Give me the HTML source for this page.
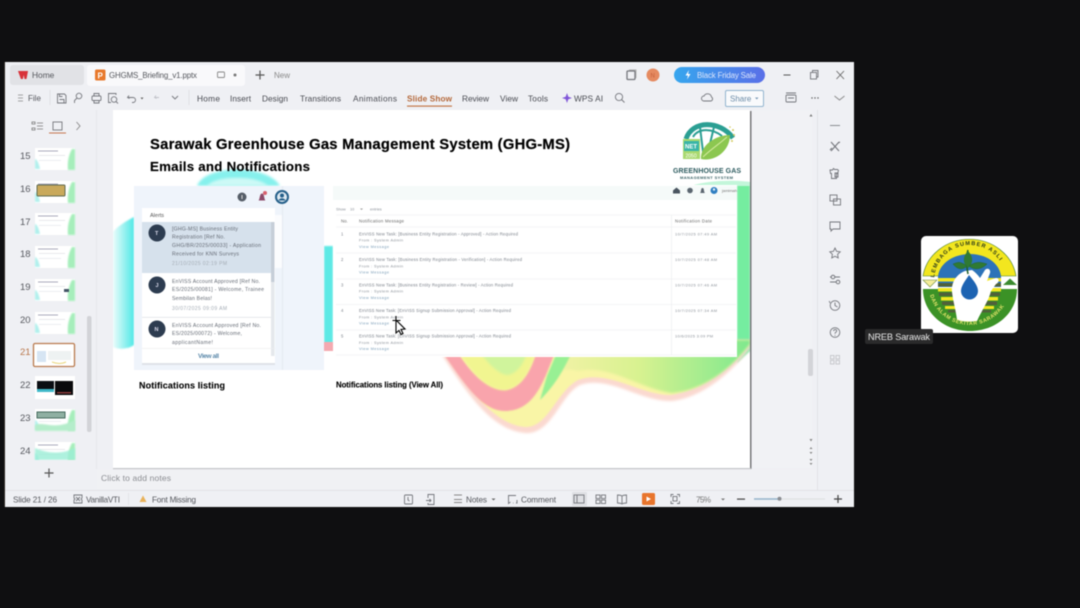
<!DOCTYPE html>
<html><head><meta charset="utf-8"><style>
html,body{margin:0;padding:0;background:#0f0f11;width:1080px;height:608px;overflow:hidden}
svg{display:block;filter:blur(.45px)}
text{font-family:"Liberation Sans",sans-serif;fill:#55575d;font-size:8.2px}
.m{font-size:8.3px;fill:#484a51}
.s{font-size:4.2px;fill:#7b818a}
.a{font-size:5.2px;fill:#666c76}
.l{font-size:3.9px;fill:#8a9098}
.v{font-size:3.9px;fill:#7fa0ba}
.b{font-weight:bold;fill:#000}
.i{fill:none;stroke:#74767c;stroke-width:.9}
</style></head><body>
<svg width="1080" height="608" viewBox="0 0 1080 608" xmlns="http://www.w3.org/2000/svg">
<defs>
<linearGradient id="btn" x1="0" x2="1"><stop offset="0" stop-color="#36a6ee"/><stop offset="1" stop-color="#5a6fe8"/></linearGradient>
<linearGradient id="rs" x1="0" x2="1"><stop offset="0" stop-color="#f4f2a8"/><stop offset=".45" stop-color="#d8f290"/><stop offset="1" stop-color="#7ee88e"/></linearGradient>
<linearGradient id="cy" x1="0" x2="1"><stop offset="0" stop-color="#eafcfb"/><stop offset="1" stop-color="#4fe8e6"/></linearGradient>
<filter id="bl"><feGaussianBlur stdDeviation="1.2"/></filter>
<filter id="bs"><feGaussianBlur stdDeviation=".8"/></filter>
<g id="th"><rect width="40" height="22" fill="#fff"/><rect x="3" y="2.500" width="20" height="1" fill="#aab"/><rect x="4" y="7" width="26" height=".8" fill="#e2e4e8"/><rect x="4" y="12" width="22" height=".8" fill="#e8eaee"/><path d="M33 22C32 14 34 6 37 1L40 1V22Z" fill="#a6eebb" filter="url(#bs)"/><path d="M0 21V11C2 11 4 16 5 21Z" fill="#b0f0ec" filter="url(#bs)"/></g>
<clipPath id="sc"><rect x="113" y="110" width="637" height="358"/></clipPath>
<clipPath id="tl"><rect x="921" y="236" width="97" height="97" rx="5"/></clipPath>
<clipPath id="thc"><rect x="30" y="112" width="50" height="348"/></clipPath>
<path id="topa" d="M934 281A36 36 0 0 1 1006 281"/>
<path id="bota" d="M929.500 293A41 41 0 0 0 1009.500 293"/>
</defs>

<!-- window -->
<rect x="5" y="62" width="849" height="445" fill="#eff0f4"/>
<rect x="4" y="62" width="1" height="445" fill="#2b2622"/>
<rect x="10" y="65" width="74" height="20" rx="3" fill="#e1e2e6"/>
<rect x="87" y="65" width="158" height="21" rx="3" fill="#f9f9fb"/>
<path d="M18 71h10l-1.500 8h-2l-.8-4-.8 4h-2z" fill="#d8323a"/>
<text x="32" y="78" style="font-size:8.400px">Home</text>
<rect x="95" y="69.500" width="10.500" height="11" rx="1.500" fill="#e8792c"/>
<text x="97.500" y="78.500" style="font-size:8px;fill:#fff;font-weight:bold">P</text>
<text x="109" y="78" textLength="88" style="font-size:7.900px">GHGMS_Briefing_v1.pptx</text>
<rect x="217.500" y="72" width="7" height="5.500" rx="1" class="i" style="stroke:#888"/>
<circle cx="235" cy="75" r="1.500" fill="#777"/>
<path d="M260 70.500v9M255.500 75h9" stroke="#555" stroke-width="1.200"/>
<text x="274" y="78" style="font-size:8px;fill:#888">New</text>

<rect x="627" y="71" width="8" height="8.500" rx="1" class="i" style="stroke-width:1.300"/><path d="M629 70h7v8" class="i" style="stroke:#aaa"/>
<circle cx="653" cy="75" r="6.500" fill="#e58a60"/><text x="650.500" y="77.500" style="font-size:6px;fill:#c5603c">N</text>
<rect x="674" y="67" width="91" height="16" rx="8" fill="url(#btn)"/>
<path d="M689 70l-3.500 5.500h2.500l-1 4 3.500-5.500h-2.500z" fill="#fff"/>
<text x="697" y="78" textLength="59" style="font-size:7.900px;fill:#dbe5fb">Black Friday Sale</text>
<path d="M783.500 75h7" stroke="#555" stroke-width="1"/>
<rect x="810.500" y="72.500" width="6" height="6.500" class="i"/><path d="M812.500 72.500v-2h5.500v6.500h-1.500" class="i"/>
<path d="M836.500 71l7.500 8M844 71l-7.500 8" class="i" style="stroke:#666"/>

<path d="M18 95h5M18 98h5M18 101h5" stroke="#888" stroke-width=".8"/>
<text x="28" y="101" style="font-size:8px">File</text>
<path d="M50 90v15M189 90v15" stroke="#dfe0e4"/>
<path d="M57.500 94h7l1.500 1.500v7.500h-8.500zM59.500 99.500h4.500v3.500M59.500 94v2.500h3" class="i"/>
<circle cx="79" cy="96" r="2.800" class="i"/><path d="M77 98l-2.500 2.500v2.500" class="i"/>
<rect x="92" y="96" width="9" height="4.500" rx="1" class="i"/><path d="M94 96v-2.500h5V96M94 100v3h5v-3" class="i"/>
<path d="M116 95v-1.500h-7.500v9H111" class="i"/><circle cx="114" cy="99.500" r="2.800" class="i"/><path d="M116 101.500l2 2" class="i"/>
<path d="M129 95.500l-1.500 2 2 1M128 97.500h5a2.500 2.500 0 0 1 0 5h-1" class="i"/>
<path d="M140.500 97.500h3l-1.500 2z" fill="#666"/>
<path d="M156 95.500l-1.500 2 2 1M155 97.500h4" class="i" style="stroke:#c0c2c8"/>
<path d="M172 96l3 3 3-3" class="i"/>
<text class="m" x="197" y="101.500" textLength="23">Home</text>
<text class="m" x="230" y="101.500" textLength="21">Insert</text>
<text class="m" x="262" y="101.500" textLength="26">Design</text>
<text class="m" x="300" y="101.500" textLength="41">Transitions</text>
<text class="m" x="353" y="101.500" textLength="44">Animations</text>
<text x="407" y="101.500" textLength="45" style="font-size:8.200px;font-weight:bold;fill:#b4683a">Slide Show</text>
<text class="m" x="462" y="101.500" textLength="27">Review</text>
<text class="m" x="500" y="101.500" textLength="18">View</text>
<text class="m" x="528" y="101.500" textLength="20">Tools</text>
<text class="m" x="574" y="101.500" textLength="29">WPS AI</text>
<rect x="407" y="105.500" width="45" height="1.200" fill="#c4784a"/>
<path d="M567 93l1.300 3.700 3.700 1.300-3.700 1.300-1.300 3.700-1.300-3.700-3.700-1.300 3.700-1.300z" fill="#7f55d8"/>
<circle cx="619" cy="97" r="3.600" class="i"/><path d="M621.500 99.500l3 3" class="i"/>
<path d="M704 101a2.500 2.500 0 0 1 0-5 4 4 0 0 1 7.500 1 2.200 2.200 0 0 1-.5 4z" class="i"/>
<rect x="725.500" y="90.500" width="38" height="16" rx="1.500" fill="#f9fafc" stroke="#92b4cf"/>
<text x="730" y="101.500" style="font-size:8px;fill:#6c8ca8">Share</text><path d="M755 97.500h3.500l-1.700 2z" fill="#7a9ab5"/>
<rect x="786" y="95" width="10" height="7" rx="1" class="i"/><path d="M786 93h10M788 98h6" class="i"/>
<circle cx="812" cy="98" r=".7" fill="#555"/><circle cx="815" cy="98" r=".7" fill="#555"/><circle cx="818" cy="98" r=".7" fill="#555"/>
<path d="M834.500 96l5 4 5-4" class="i" style="stroke:#888"/>

<!-- left panel -->
<path d="M32 122h3v2h-3zM32 128h3v2h-3zM37 123h6M37 126h6M37 129h6" class="i" style="stroke:#777;stroke-width:.8"/>
<rect x="53" y="122" width="9" height="8" class="i"/><rect x="49" y="132.500" width="17" height="1" fill="#c5764e"/>
<path d="M76.500 122l3.500 4-3.500 4" class="i" style="stroke:#888"/>
<path d="M96.500 110v359" stroke="#e6e7eb"/>
<rect x="87" y="316" width="4.500" height="116" rx="2" fill="#d2d3d7"/>
<g clip-path="url(#thc)">
<use href="#th" x="35" y="148"/>
<use href="#th" x="35" y="181"/><rect x="37" y="185" width="28" height="11" rx="1" fill="#c9a95b" stroke="#5f6a50"/>
<use href="#th" x="35" y="213"/>
<use href="#th" x="35" y="246"/>
<use href="#th" x="35" y="279"/><rect x="64" y="289" width="5" height="3" fill="#456"/>
<use href="#th" x="35" y="312"/>
<rect x="33.500" y="343.500" width="41" height="23" rx="1.500" fill="#fff" stroke="#b97a4e" stroke-width="1.300"/><rect x="37" y="351" width="9" height="11" fill="#d6e5f3"/><rect x="48" y="351" width="23" height="9" fill="#eef2f2"/><path d="M52 362q8 3 14 0" stroke="#e9d67a" fill="none"/>
<rect x="35" y="376" width="40" height="23" fill="#fff"/><rect x="37" y="381" width="17" height="9" fill="#0a0d12"/><rect x="55" y="381" width="18" height="14" fill="#0a0a0c"/><rect x="37" y="389" width="17" height="3" fill="#3fb8c8"/><rect x="57" y="392" width="14" height="1.500" fill="#8a3a3a"/>
<use href="#th" x="35" y="409"/><rect x="37" y="412" width="28" height="6" fill="#8fb0a2" stroke="#456a5e"/><path d="M35 431v-6c10-4 18 6 40-5v11z" fill="#b5edcb" filter="url(#bs)"/>
<use href="#th" x="35" y="442"/><path d="M35 460v-12c14 6 28 6 40 0v12z" fill="#9beed6" opacity=".8" filter="url(#bs)"/>
</g>
<text x="20" y="159" style="font-size:9.500px">15</text><text x="20" y="192" style="font-size:9.500px">16</text><text x="20" y="225" style="font-size:9.500px">17</text><text x="20" y="257" style="font-size:9.500px">18</text><text x="20" y="290" style="font-size:9.500px">19</text><text x="20" y="323" style="font-size:9.500px">20</text>
<text x="20" y="355" style="font-size:9.500px;fill:#b9764a">21</text><text x="20" y="388" style="font-size:9.500px">22</text><text x="20" y="421" style="font-size:9.500px">23</text><text x="20" y="454" style="font-size:9.500px">24</text>
<path d="M49 468.500v9M44.500 473h9" stroke="#555" stroke-width="1.200"/>

<!-- slide -->
<rect x="752" y="110" width="60" height="358" fill="#f1f2f5"/>
<rect x="113" y="110" width="637" height="358" fill="#fff"/>
<rect x="750" y="111" width="1.500" height="358" fill="#77787a"/>
<rect x="113" y="468" width="638" height="1.200" fill="#c4c5c8"/>
<g clip-path="url(#sc)">
<path d="M197 186C205 164 268 164 280 186Z" fill="#86f1ed" filter="url(#bl)"/>
<path d="M207 186C215 175 258 175 268 186Z" fill="#cdf9f6" filter="url(#bl)"/>
<path d="M134 217C124 222 116 228 113 232V347C120 350 128 349 134 345Z" fill="url(#cy)" filter="url(#bs)"/>
<path d="M324 246h9v97h-9z" fill="#5de9e5" filter="url(#bs)"/>
<path d="M324 342h9v9h-9z" fill="#f4a9b0"/>
<path d="M737 183h13v168l-13 12z" fill="#75eda0" filter="url(#bs)"/>
<path d="M690 186C710 180 735 180 750 182V186z" fill="#c3f6da"/>
<!-- swoosh -->
<path d="M440 352C465 390 490 430 525 433C552 435 560 395 580 385C610 375 640 402 672 401C700 398 730 375 750 348V340H440Z" fill="#fbd9d0" filter="url(#bl)"/>
<path d="M444 352C468 388 495 425 525 427C548 428 556 392 578 380C608 369 640 395 670 395C700 391 728 372 750 344V340H444Z" fill="#f9f5a6" filter="url(#bs)"/>
<path d="M560 352L548 380C556 371 564 367 578 371C610 364 640 389 672 393C702 390 728 372 750 344V340H560Z" fill="url(#rs)" filter="url(#bl)"/>
<path d="M441 350C465 385 482 411 505 411C528 411 538 393 546 375L556 350H537C530 374 520 388 505 390C487 390 470 372 456 350Z" fill="#f9a4ac" filter="url(#bs)"/>
<path d="M458 350C472 373 487 390 505 390C520 388 530 373 536 350Z" fill="#f1f590" filter="url(#bl)"/>
<path d="M478 350C490 366 500 375 508 375C518 373 524 363 528 350Z" fill="#d0f49c" filter="url(#bl)"/>
<path d="M558 350L547 376L540 400C550 390 560 378 572 352Z" fill="#98f094" filter="url(#bs)"/>
</g>
<text x="150" y="149" textLength="420" class="b" style="font-size:14.800px;stroke:#000;stroke-width:.2">Sarawak Greenhouse Gas Management System (GHG-MS)</text>
<text x="150" y="171" textLength="160" class="b" style="font-size:13.300px;stroke:#000;stroke-width:.15">Emails and Notifications</text>
<!-- slide logo -->
<path d="M686 139C692 120 720 120 733 138" fill="none" stroke="#2b9f93" stroke-width="5"/>
<path d="M693 137C698 128 712 128 722 136M700 127L703 152M714 127L708 152" fill="none" stroke="#2b9f93" stroke-width="2"/>
<rect x="683" y="139" width="17" height="20" fill="#a9d96f"/><rect x="684" y="141" width="15" height="10" fill="#39b5a8"/>
<text x="685" y="148.500" style="font-size:6px;fill:#fff;font-weight:bold">NET</text>
<text x="685.500" y="157.500" style="font-size:5px;fill:#fff">2050</text>
<path d="M701 159C700 145 716 135 730 135C730 150 716 162 701 159Z" fill="#8cc750"/>
<path d="M703 157C710 150 718 145 727 137" stroke="#d4eb9f" fill="none"/>
<circle cx="733" cy="130" r="1" fill="#d4c95f"/><circle cx="730" cy="127" r=".8" fill="#d4c95f"/><circle cx="732" cy="141" r="1" fill="#d4c95f"/><circle cx="734" cy="135" r="1" fill="#c9c45c"/>
<text x="673" y="173" textLength="68" style="font-size:7px;font-weight:bold;fill:#2e5c60">GREENHOUSE GAS</text>
<text x="680" y="179" textLength="53" style="font-size:4px;font-weight:bold;fill:#3c6468">MANAGEMENT SYSTEM</text>

<!-- alerts panel -->
<rect x="134" y="186" width="190" height="184" fill="#eff4fb"/>
<rect x="282" y="186" width="1" height="184" fill="#e4e9f0"/>
<rect x="142" y="215" width="140" height="53" fill="#fff" opacity=".75"/>
<circle cx="242" cy="197" r="4.500" fill="#565e68"/><rect x="241.500" y="195" width="1" height="4" fill="#ddd"/>
<path d="M258.500 200.500c1.500-1 1-7 3.500-7s2 6 3.500 7z" fill="#8c4a6a"/><circle cx="265" cy="193" r="2" fill="#d8606e"/>
<circle cx="282" cy="197" r="7" fill="#26608a"/><circle cx="282" cy="197" r="5" fill="#dfeaf2"/><circle cx="282" cy="195.500" r="2" fill="#26608a"/><path d="M278.500 200.500c1-3 6-3 7 0z" fill="#26608a"/>
<rect x="142" y="208" width="133" height="156" fill="#fff"/><rect x="142" y="363" width="133" height="2" fill="#dfe3e8"/>
<text x="150" y="217" style="font-size:5.500px;fill:#555">Alerts</text>
<rect x="142" y="222" width="131" height="51" fill="#d6e1ec"/>
<rect x="271" y="222" width="3.500" height="134" fill="#e5e8ec"/><rect x="271" y="222" width="3.500" height="60" fill="#c6ced8"/>
<rect x="142" y="317" width="129" height=".7" fill="#dde0e5"/>
<rect x="142" y="348" width="133" height=".7" fill="#eceef0"/>
<circle cx="157" cy="233" r="8.500" fill="#2d3c50"/><circle cx="157" cy="285" r="8.500" fill="#2d3c50"/><circle cx="157" cy="329" r="8.500" fill="#2d3c50"/>
<text x="155" y="235" style="font-size:5.500px;fill:#dde;font-weight:bold">T</text><text x="155.500" y="287" style="font-size:5.500px;fill:#dde;font-weight:bold">J</text><text x="154.500" y="331" style="font-size:5.500px;fill:#dde;font-weight:bold">N</text>
<text class="a" x="172" y="230.500" textLength="66">[GHG-MS] Business Entity</text>
<text class="a" x="172" y="238.500" textLength="53">Registration [Ref No.</text>
<text class="a" x="172" y="247" textLength="89">GHG/BR/2025/00033] - Application</text>
<text class="a" x="172" y="255.500" textLength="67">Received for KNN Surveys</text>
<text x="172" y="265" textLength="55" style="font-size:5px;fill:#a5adb6">21/10/2025 02:19 PM</text>
<text class="a" x="172" y="283" textLength="88">EnVISS Account Approved [Ref No.</text>
<text class="a" x="172" y="291" textLength="92">ES/2025/00081] - Welcome, Trainee</text>
<text class="a" x="172" y="300" textLength="40">Sembilan Belas!</text>
<text x="172" y="310" textLength="55" style="font-size:5px;fill:#a5adb6">30/07/2025 09:09 AM</text>
<text class="a" x="172" y="327" textLength="89">EnVISS Account Approved [Ref No.</text>
<text class="a" x="172" y="335" textLength="70">ES/2025/00072) - Welcome,</text>
<text class="a" x="172" y="344" textLength="41">applicantName!</text>
<text x="198" y="358" textLength="21" style="font-size:6.500px;font-weight:bold;fill:#5b89aa">View all</text>
<text x="139" y="388.500" textLength="86" class="b" style="font-size:9px;stroke:#000;stroke-width:.1">Notifications listing</text>
<text x="336" y="387.500" textLength="107" class="b" style="font-size:7.800px;stroke:#000;stroke-width:.1">Notifications listing (View All)</text>

<!-- table panel -->
<rect x="333" y="185" width="404" height="172" fill="#fff"/>
<rect x="333" y="186" width="404" height="14" fill="#f5faf9"/>
<path d="M673 190.500l3.500-3 3.500 3v3h-7z" fill="#4a5560"/><circle cx="690" cy="190.500" r="2.800" fill="#5b6670"/><path d="M700 193c1.500-1 .5-5 2.500-5s1 4 2.500 5z" fill="#5b6670"/>
<circle cx="714" cy="190.500" r="3.500" fill="#2f7fc1"/><circle cx="714" cy="189.500" r="1.200" fill="#e6f0f8"/>
<text x="722" y="192" textLength="15" style="font-size:4px;fill:#777">jamimah</text>
<text x="336" y="210.500" class="l">Show</text><text x="350" y="210.500" class="l">10</text><path d="M360 208.500h3l-1.500 1.500z" fill="#999"/><text x="370" y="210.500" class="l">entries</text>
<path d="M336 215h400M336 227h400" stroke="#f1f2f4" stroke-width=".7"/>
<path d="M336 253h400M336 279h400M336 304.500h400M336 330h400M336 355h400" stroke="#f1f2f4" stroke-width=".7"/>
<path d="M671.500 215v140" stroke="#eceef0" stroke-width=".7"/>
<text x="341" y="222.500" style="font-size:4.300px;fill:#666">No.</text>
<text x="359" y="222.500" textLength="45" style="font-size:4.300px;fill:#666">Notification Message</text>
<text x="675" y="222.500" textLength="37" style="font-size:4.300px;fill:#666">Notification Date</text>
<text class="s" x="341" y="235.500">1</text><text class="s" x="359" y="235.500" textLength="159">EnVISS New Task: [Business Entity Registration - Approved] - Action Required</text><text class="l" x="359" y="241.500" textLength="44">From : System Admin</text><text class="v" x="359" y="248" textLength="30">View Message</text><text class="l" x="675" y="235.500" textLength="42">10/7/2025 07:49 AM</text>
<text class="s" x="341" y="261">2</text><text class="s" x="359" y="261" textLength="163">EnVISS New Task: [Business Entity Registration - Verification] - Action Required</text><text class="l" x="359" y="267.500" textLength="44">From : System Admin</text><text class="v" x="359" y="273.500" textLength="30">View Message</text><text class="l" x="675" y="261" textLength="42">10/7/2025 07:48 AM</text>
<text class="s" x="341" y="286.500">3</text><text class="s" x="359" y="286.500" textLength="154">EnVISS New Task: [Business Entity Registration - Review] - Action Required</text><text class="l" x="359" y="292.500" textLength="44">From : System Admin</text><text class="v" x="359" y="299" textLength="30">View Message</text><text class="l" x="675" y="286.500" textLength="42">10/7/2025 07:46 AM</text>
<text class="s" x="341" y="312">4</text><text class="s" x="359" y="312" textLength="152">EnVISS New Task: [EnVISS Signup Submission Approval] - Action Required</text><text class="l" x="359" y="318.500" textLength="44">From : System Admin</text><text class="v" x="359" y="324.500" textLength="30">View Message</text><text class="l" x="675" y="312" textLength="42">10/7/2025 07:34 AM</text>
<text class="s" x="341" y="337.500">5</text><text class="s" x="359" y="337.500" textLength="152">EnVISS New Task: [EnVISS Signup Submission Approval] - Action Required</text><text class="l" x="359" y="344" textLength="44">From : System Admin</text><text class="v" x="359" y="350" textLength="30">View Message</text><text class="l" x="675" y="337.500" textLength="38">10/6/2025 3:09 PM</text>
<!-- cursor -->
<path d="M396 320l0 13 3-2.500 2 4 2-1-2-4 4-.5z" fill="#fff" stroke="#000" stroke-width="1.100"/>
<path d="M396 316v8M392.500 320.500h8" stroke="#000" stroke-width="1"/>

<!-- side scroll -->
<path d="M811 114l1.500 2.500h-3z" fill="#777"/>
<rect x="808" y="349" width="5" height="27" rx="2" fill="#d3d4d8"/>
<path d="M809.500 439h3l-1.500 2.500zM809.500 449l1.500-2 1.500 2zM809.500 452h3l-1.500 2zM809.500 459h3l-1.500 2zM809.500 463h3l-1.500 2z" fill="#888"/>
<path d="M817.500 110v380" stroke="#e2e3e7"/>
<rect x="830" y="125" width="10" height="1" fill="#8a8c91"/>
<path d="M831 142l8 9M839 142l-8 9M830 150l2-2M838 143l2-1" class="i" style="stroke-width:1.100"/>
<path d="M830 170h2.500l1-1.500 1 1h3l1 1-1 3h-1v5h-5v-5h-1zM835 173h3v4h-3z" class="i"/>
<rect x="830" y="195" width="7" height="6" class="i"/><rect x="833.500" y="199" width="7" height="6" class="i"/>
<path d="M830 222h10v7h-7l-2 2v-2h-1z" class="i"/>
<path d="M835 248l1.600 3.300 3.600.5-2.600 2.500.6 3.600-3.200-1.700-3.200 1.700.6-3.600-2.600-2.500 3.600-.5z" class="i"/>
<path d="M830 277h10M830 282h10" class="i"/><circle cx="833" cy="277" r="1.800" fill="#f1f2f5" stroke="#74767c"/><circle cx="838" cy="282" r="1.800" fill="#f1f2f5" stroke="#74767c"/>
<circle cx="835" cy="305.500" r="4.800" class="i"/><path d="M835 302.500v3l2.500 1.500M830 303l-.8-2" class="i"/>
<circle cx="835" cy="332.500" r="4.800" class="i"/><path d="M833.500 331c.5-2 3.500-1.800 3.200.2-.2 1-1.700 1-1.700 2.500M835 335v.7" class="i"/>
<g fill="none" stroke="#c8c9cd"><rect x="830.500" y="355.500" width="3.500" height="3.500"/><rect x="836" y="355.500" width="3.500" height="3.500"/><rect x="830.500" y="360.500" width="3.500" height="3.500"/><rect x="836" y="360.500" width="3.500" height="3.500"/></g>

<!-- notes -->
<rect x="97" y="469.500" width="720" height="20" fill="#f0f1f4"/>
<text x="101" y="481" textLength="70" style="font-size:8.500px;fill:#8b8d92">Click to add notes</text>
<rect x="5" y="490" width="849" height=".8" fill="#dfe0e4"/>

<!-- status -->
<text x="13" y="502.500" textLength="44">Slide 21 / 26</text>
<path d="M74 495h8v3l-1 1 1 1v3h-8v-3l1-1-1-1zM76 497l4 4M80 497l-4 4" class="i"/>
<text x="86" y="502.500" textLength="34">VanillaVTI</text>
<path d="M128.500 493v12" stroke="#e3e4e8"/>
<path d="M143 495.500l3.500 6.500h-7z" fill="#e8b25a"/>
<text x="152" y="502.500" textLength="44">Font Missing</text>
<rect x="404.500" y="495" width="8" height="9" rx="1" class="i"/><path d="M408 497v3l1.500 1" class="i"/>
<path d="M428 498v-3.500h6v10h-6v-1.500M426 500.500h5M429.500 499l1.500 1.500-1.500 1.500" class="i"/>
<path d="M454 495h8M454 499.500h8M454 502.500h8" class="i" style="stroke:#888"/>
<text x="466" y="502.500" textLength="21">Notes</text><path d="M491.500 498.500h4l-2 2z" fill="#666"/>
<path d="M516 495.500h-7.500v8l2-1.500M513 503h.5M517 500v3h-1" class="i"/>
<text x="521" y="502.500" textLength="35">Comment</text>
<rect x="572" y="492" width="15" height="14" rx="1" fill="#dfe0e4"/>
<rect x="574" y="495" width="10" height="8" class="i"/><path d="M577 495v8" class="i"/>
<rect x="596" y="495" width="4" height="3.500" class="i"/><rect x="601.500" y="495" width="4" height="3.500" class="i"/><rect x="596" y="500" width="4" height="3.500" class="i"/><rect x="601.500" y="500" width="4" height="3.500" class="i"/>
<path d="M622 496c-1.500-1-3-1-4.500-1v8c1.500 0 3 0 4.500 1 1.500-1 3-1 4.500-1v-8c-1.500 0-3 0-4.500 1v8" class="i"/>
<rect x="642" y="493" width="13" height="12" rx="1.500" fill="#e8752c"/><path d="M646.500 496.500l4.500 2.500-4.500 2.500z" fill="#fff"/>
<path d="M671 497v-2.500h2.500M677 494.500h2.500v2.500M679.500 501v2.500H677M673.500 503.500H671V501" class="i"/><rect x="673" y="496.500" width="4" height="4.500" class="i"/>
<text x="696" y="502.500" textLength="15" style="fill:#777">75%</text>
<path d="M721 498.500h4l-2 2z" fill="#777"/>
<rect x="737" y="498.500" width="8" height="1.200" fill="#444"/>
<rect x="754" y="498.500" width="71" height="1" fill="#dcdde0"/><rect x="754" y="498.300" width="25" height="1.400" fill="#8fb0c8"/><circle cx="779.500" cy="498.700" r="2" fill="#8a8d92"/>
<path d="M838 495v8M834 499h8" stroke="#444" stroke-width="1.200"/>

<!-- video tile -->
<rect x="921" y="236" width="97" height="97" rx="5" fill="#fff"/>
<g clip-path="url(#tl)">
<path d="M923 276A47 43 0 0 1 1016 276Z" fill="#f2e61f" stroke="#3f7a2d" stroke-width=".6"/>
<path d="M938 276C940 262 955 254 970 254S999 262 1001 276V287H938Z" fill="#2c73b8"/>
<path d="M923 280h14l-7 7z" fill="#f5ee9a" stroke="#6a8a3a" stroke-width=".6"/>
<path d="M1003 285l7-6.500 7 6.500z" fill="#3a8a2e"/>
<path d="M923 289H1017C1017 313 996 331 970 331S923 313 923 289Z" fill="#3b9226"/>
<g fill="#f2e61f"><rect x="938" y="278" width="63" height="3.500"/><rect x="938" y="288" width="63" height="3.500"/><rect x="941" y="297" width="57" height="3.500"/><rect x="945" y="306" width="49" height="3"/></g>
<g fill="#50603a"><rect x="938" y="283" width="63" height="3.500"/><rect x="939" y="292.500" width="61" height="3.500"/><rect x="942" y="301.500" width="55" height="3.500"/><rect x="948" y="310" width="43" height="2.500"/></g>
<path d="M952 292C951 282 957 274 965 271L972 270C975 272 978 275 980 278L985 270C988 267 991 270 990 273L987 281L996 278C1000 278 999 283 996 284L991 291C989 300 982 310 977 321C970 322 962 322 957 320C956 311 953 301 952 292Z" fill="#fff"/>
<path d="M969 275C974 281 978 286 978 291A8.500 8.500 0 0 1 961 291C961 286 965 281 969 275Z" fill="#1d63b2"/>
<path d="M968 250C966 256 966 264 968 274" fill="none" stroke="#1f5e28" stroke-width="1.500"/>
<path d="M968 251C962 257 963 264 968 268C973 264 974 257 968 251Z" fill="#2f7a33"/>
<path d="M967 266C960 261 958 262 953 264C957 269 962 271 967 266ZM969 266C976 261 981 262 987 264C982 269 975 271 969 266Z" fill="#2f7a33" stroke="#1f5e28" stroke-width=".4"/>
<text style="font-size:5.600px;font-weight:bold;fill:#2a3a1a;letter-spacing:1.100px"><textPath href="#topa" startOffset="3%">LEMBAGA SUMBER ASLI</textPath></text>
<text style="font-size:5.300px;font-weight:bold;fill:#e3e36a;letter-spacing:.55px"><textPath href="#bota" startOffset="2%">DAN ALAM SEKITAR SARAWAK</textPath></text>
</g>
<rect x="865" y="329" width="68" height="15" rx="2" fill="#2a2a2b"/>
<text x="868" y="340" textLength="62" style="font-size:9.200px;fill:#e8e8e8">NREB Sarawak</text>
</svg>
</body></html>
